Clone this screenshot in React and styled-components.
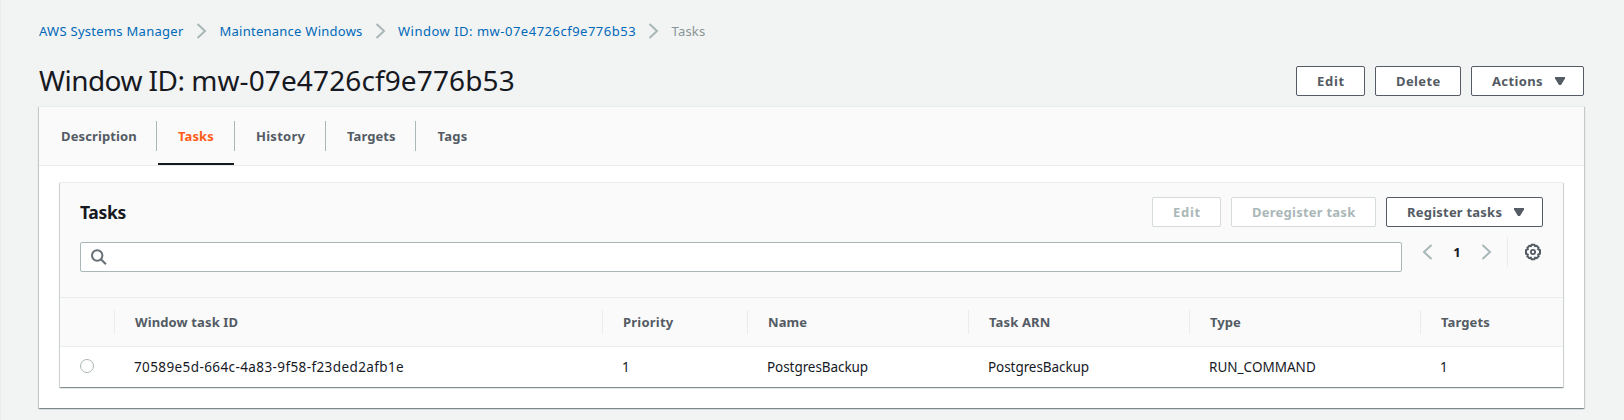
import React from "react";
import styled, { createGlobalStyle } from "styled-components";

const GlobalStyle = createGlobalStyle`
  *, *::before, *::after { box-sizing: border-box; }
  body {
    margin: 0;
    background: #f2f3f3;
    color: #16191f;
    font: 13px/22px "Noto Sans", "Open Sans", sans-serif;
    overflow: hidden;
  }
`;

const Page = styled.div`
  height: 420px;
  padding: 20px 40px 0 38px;
  border-left: 1px solid #eaeded;
`;

const Label = styled.span`
  letter-spacing: ${(p) => p.$track || 0}px;
  white-space: nowrap;
`;

const Code = styled(Label)`
  font-size: 13.5px;
`;

const Breadcrumbs = styled.nav`
  display: flex;
  align-items: center;
  height: 22px;
`;

const Crumb = styled.a`
  width: ${(p) => p.$width}px;
  height: 22px;
  color: ${(p) => (p.$current ? "#879596" : "#0069b8")};
  white-space: nowrap;
`;

const ArrowIcon = styled.svg`
  flex: none;
  width: 11px;
  height: 16px;
`;

const CrumbArrow = styled(ArrowIcon)`
  margin-right: 12.5px;
`;

const TitleBar = styled.header`
  display: flex;
  justify-content: space-between;
  padding-top: 20px;
  height: 64px;
`;

const PageTitle = styled.h1`
  margin: 0;
  font-size: 28px;
  font-weight: 400;
  line-height: 36px;
`;

const ButtonGroup = styled.div`
  display: flex;
  gap: 10px;
`;

const HeaderButtons = styled(ButtonGroup)`
  padding-top: 4px;
`;

const Button = styled.button`
  display: flex;
  align-items: center;
  justify-content: space-between;
  width: ${(p) => p.$width}px;
  height: 30px;
  padding: 0 20px;
  border: 1px solid ${(p) => (p.disabled ? "#d5dbdb" : "#545b64")};
  border-radius: 2px;
  background: #fff;
  color: ${(p) => (p.disabled ? "#aab7b8" : "#545b64")};
  font: 700 13px/20px "Noto Sans", "Open Sans", sans-serif;
`;

const Caret = styled.svg`
  width: 10px;
  height: 8px;
  margin: 0 -2px 1px 0;
  fill: #545b64;
`;

const Card = styled.section`
  background: #fff;
  border-top: 1px solid #eaeded;
  box-shadow: 0 1px 1px 0 rgba(0, 28, 36, 0.3), 1px 1px 1px 0 rgba(0, 28, 36, 0.15),
    -1px 1px 1px 0 rgba(0, 28, 36, 0.15);
`;

const WindowCard = styled(Card)`
  height: 302px;
`;

const TabList = styled.div`
  display: flex;
  height: 59px;
  background: #fafafa;
  border-bottom: 1px solid #eaeded;
`;

const Tab = styled.button`
  display: flex;
  width: ${(p) => p.$width}px;
  height: 58px;
  margin-left: ${(p) => p.$gap || 0}px;
  padding: 14px 0 0;
  border: 0;
  border-bottom: 2px solid ${(p) => (p.$active ? "#16191f" : "transparent")};
  background: none;
  color: ${(p) => (p.$active ? "#ff5d17" : "#545b64")};
  font: 700 13px/30px "Noto Sans", "Open Sans", sans-serif;
`;

const TabText = styled(Label)`
  padding-left: ${(p) => p.$indent}px;
`;

const TabDivider = styled.i`
  flex: none;
  width: 1px;
  height: 30px;
  margin-top: 14px;
  background: #aab7b8;
`;

const TasksPanel = styled(Card)`
  height: 205px;
  margin: 16px 21px 0;
`;

const PanelTop = styled.div`
  height: 115px;
  padding: 14px 20px 0;
  background: #fafafa;
  border-bottom: 1px solid #eaeded;
`;

const PanelHeading = styled.div`
  display: flex;
  justify-content: space-between;
  align-items: center;
  height: 30px;
`;

const PanelTitle = styled.h2`
  margin: 0;
  font-size: 17.5px;
  line-height: 22px;
`;

const FilterRow = styled.div`
  display: flex;
  padding-top: 10px;
`;

const SearchBox = styled.label`
  display: flex;
  align-items: center;
  width: 1322px;
  flex: none;
  height: 30px;
  margin-top: 5px;
  padding-left: 10px;
  border: 1px solid #aab7b8;
  border-radius: 2px;
  background: #fff;
`;

const SearchInput = styled.input`
  flex: 1;
  border: 0;
  outline: 0;
  background: none;
`;

const Pager = styled.div`
  display: flex;
  flex: none;
  align-items: center;
  height: 30px;
  margin-left: 20px;
  padding-right: 15px;
  border-right: 1px solid #eaeded;
`;

const PageNumber = styled.b`
  width: 48px;
  text-align: center;
  line-height: 30px;
`;

const SettingsIcon = styled.svg`
  flex: none;
  width: 18px;
  height: 18px;
  margin: 6px 0 0 16px;
`;

const Grid = styled.div`
  display: grid;
  grid-template-columns: 54px 488px 145px 221px 221px 231px 143px;
`;

const HeadRow = styled(Grid)`
  height: 49px;
  padding-top: 12px;
  background: #fafafa;
  border-bottom: 1px solid #eaeded;
`;

const HeadCell = styled.div`
  height: 24px;
  padding-left: 20px;
  border-left: ${(p) => (p.$first ? 0 : 1)}px solid #eaeded;
  color: #545b64;
  font-weight: 700;
  line-height: 24px;
`;

const BodyRow = styled(Grid)`
  height: 40px;
  align-items: center;
`;

const Cell = styled.div`
  padding-left: 20px;
  line-height: 20px;
`;

const Radio = styled.span`
  display: block;
  width: 14px;
  height: 14px;
  margin-top: -2px;
  border: 1px solid #aab7b8;
  border-radius: 50%;
  background: #fff;
`;

const RightPath = () => <path d="M1.5 1 9 8l-7.5 7" fill="none" stroke="#aab7b8" strokeWidth="2" />;
const LeftPath = () => <path d="M9.5 1 2 8l7.5 7" fill="none" stroke="#aab7b8" strokeWidth="2" />;

const Separator = () => (
  <CrumbArrow viewBox="0 0 11 16">
    <RightPath />
  </CrumbArrow>
);

const Down = () => (
  <Caret viewBox="0 0 10 8">
    <path d="M0 0h10v1.5L6 8H4L0 1.5z" />
  </Caret>
);

const tabs = [
  { name: "Description", track: 0.12, width: 117, indent: 22 },
  { name: "Tasks", track: 0.1, width: 76, indent: 20, gap: 1, active: true },
  { name: "History", track: 0.26, width: 90, indent: 21 },
  { name: "Targets", track: 0.08, width: 89, indent: 21 },
  { name: "Tags", track: 0.3, width: 80, indent: 21.5 },
];

const columns = [
  { name: "Window task ID", track: 0.12, value: "70589e5d-664c-4a83-9f58-f23ded2afb1e", valueTrack: 0.4 },
  { name: "Priority", track: 0.22, value: "1" },
  { name: "Name", track: 0.1, value: "PostgresBackup", valueTrack: -0.07 },
  { name: "Task ARN", track: 0.15, value: "PostgresBackup", valueTrack: -0.07 },
  { name: "Type", track: 0.08, value: "RUN_COMMAND", valueTrack: 0.02 },
  { name: "Targets", track: 0.1, value: "1" },
];

export default function App() {
  return (
    <Page>
      <GlobalStyle />
      <Breadcrumbs>
        <Crumb $width={157}><Label $track={0.28}>AWS Systems Manager</Label></Crumb>
        <Separator />
        <Crumb $width={155}><Label $track={0.25}>Maintenance Windows</Label></Crumb>
        <Separator />
        <Crumb $width={250}><Label $track={0.5}>Window ID: mw-07e4726cf9e776b53</Label></Crumb>
        <Separator />
        <Crumb $current><Label $track={0.2}>Tasks</Label></Crumb>
      </Breadcrumbs>

      <TitleBar>
        <PageTitle>
          <Label $track={-0.55}>Window ID: </Label>
          <Label $track={0.12}>mw-07e4726cf9e776b53</Label>
        </PageTitle>
        <HeaderButtons>
          <Button $width={69}><Label $track={0.7}>Edit</Label></Button>
          <Button $width={86}><Label $track={0.39}>Delete</Label></Button>
          <Button $width={113}><Label $track={0.37}>Actions</Label><Down /></Button>
        </HeaderButtons>
      </TitleBar>

      <WindowCard>
        <TabList>
          {tabs.map((t, i) => (
            <React.Fragment key={t.name}>
              {i > 0 && <TabDivider />}
              <Tab $width={t.width} $gap={t.gap} $active={t.active}>
                <TabText $track={t.track} $indent={t.indent}>{t.name}</TabText>
              </Tab>
            </React.Fragment>
          ))}
        </TabList>

        <TasksPanel>
          <PanelTop>
            <PanelHeading>
              <PanelTitle><Label $track={-0.35}>Tasks</Label></PanelTitle>
              <ButtonGroup>
                <Button $width={69} disabled><Label $track={0.7}>Edit</Label></Button>
                <Button $width={145} disabled><Label $track={0.24}>Deregister task</Label></Button>
                <Button $width={157}><Label $track={0.22}>Register tasks</Label><Down /></Button>
              </ButtonGroup>
            </PanelHeading>
            <FilterRow>
              <SearchBox>
                <svg width="16" height="16" viewBox="0 0 16 16" fill="none" stroke="#687078" strokeWidth="2">
                  <circle cx="6.2" cy="6.5" r="5.2" />
                  <path d="m9.9 10.2 5 5" />
                </svg>
                <SearchInput />
              </SearchBox>
              <Pager>
                <ArrowIcon viewBox="0 0 11 16"><LeftPath /></ArrowIcon>
                <PageNumber>1</PageNumber>
                <ArrowIcon viewBox="0 0 11 16"><RightPath /></ArrowIcon>
              </Pager>
              <SettingsIcon viewBox="0 0 18 18" fill="none" stroke="#545b64">
                <path
                  d="M7.6 1.8h2.8l.7 1.4 1.6-.4 1.9 1.9-.4 1.5 1.8.9v3.6l-1.8.9.5 1.6-2 2-1.6-.5-.7 1.5H7.6l-.7-1.5-1.6.5-2-2 .5-1.6L2 10.7V7.1l1.8-.9-.4-1.5 1.9-1.9 1.6.4z"
                  strokeWidth="2"
                  strokeLinejoin="miter"
                />
                <circle cx="9" cy="9" r="2.1" strokeWidth="1.8" />
              </SettingsIcon>
            </FilterRow>
          </PanelTop>

          <HeadRow>
            <HeadCell $first />
            {columns.map((c) => (
              <HeadCell key={c.name}><Label $track={c.track}>{c.name}</Label></HeadCell>
            ))}
          </HeadRow>
          <BodyRow>
            <Cell><Radio /></Cell>
            {columns.map((c) => (
              <Cell key={c.name}><Code $track={c.valueTrack}>{c.value}</Code></Cell>
            ))}
          </BodyRow>
        </TasksPanel>
      </WindowCard>
    </Page>
  );
}
